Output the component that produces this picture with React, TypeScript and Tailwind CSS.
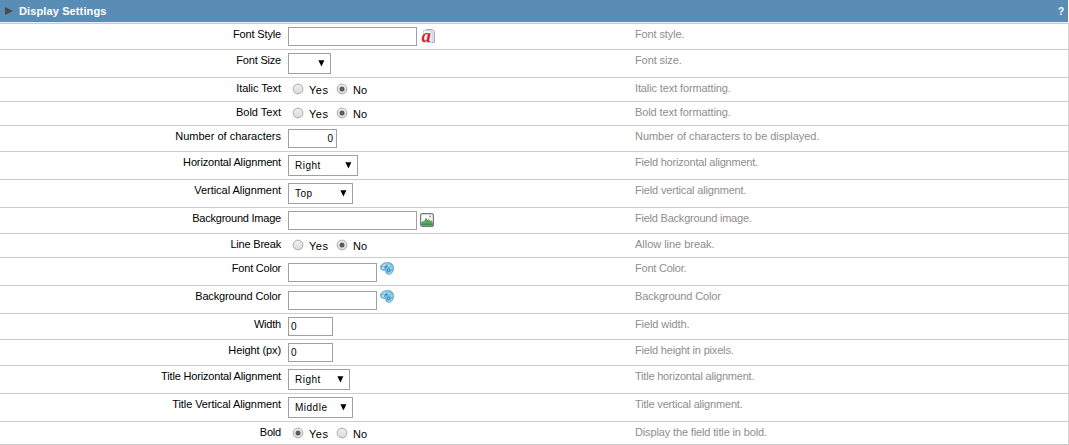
import React from "react";

function FontIcon() {
  return (
    <svg className="ml-1 mt-[2px] shrink-0" width="14" height="15" viewBox="0 0 14 15">
      <path d="M5.500 .5h6l2 2v11h-8z" fill="#dfe4f0" stroke="#a3aac0" />
      <path d="M2.500 1.500h6l2.500 2v10h-8.500z" fill="#f6f7fb" stroke="#c0c6d6" strokeWidth=".8" />
      <text x="0.500" y="12.500" fontFamily="Liberation Serif, serif" fontSize="19" fontWeight="bold" fontStyle="italic" fill="#d81f2c">a</text>
    </svg>
  );
}

function ImageIcon() {
  return (
    <svg className="ml-[3px] mt-[2px] shrink-0" width="14" height="14" viewBox="0 0 14 14">
      <rect x=".6" y=".6" width="12.800" height="12.800" rx="2" fill="#f8faf8" stroke="#77777f" strokeWidth="1.200" />
      <path d="M1.300 9.500 3 7.800 4 8.500l2-4L7.500 7 9 6l1.200 2L11.500 7.200l1.200 1.800v3.500h-11.400z" fill="#5aa561" />
      <path d="M1.300 10.500h11.400v2h-11.400z" fill="#3d8f4f" />
      <circle cx="10.200" cy="3.600" r="1" fill="#c58b6e" />
    </svg>
  );
}

function PaletteIcon() {
  return (
    <svg className="ml-[3px] -mt-px shrink-0" width="14" height="13" viewBox="0 0 14 13">
      <path d="M.4 5.400C.4 2.800 3.800 .5 7.500 .5c3.800 0 6.100 2.300 6.100 5.300 0 3.700-2.200 6.600-4.900 6.600-2 0-2.700-1-2.900-2.300C5.600 8.800 4.900 8.400 3.600 8.300 1.600 8.200.4 7 .4 5.400z" fill="#72b9dd" stroke="#609fc5" strokeWidth=".8" />
      <path d="M2 4C3.500 2 6.200 1.200 8.600 1.400 6.800 2 5.400 2.800 4.500 4.300z" fill="#b7dcec" />
      <circle cx="3" cy="6" r="1" fill="#d2edf7" />
      <circle cx="6" cy="4.800" r="1.100" fill="#4489b6" />
      <circle cx="9.200" cy="3.400" r="1.200" fill="#a6dfee" />
      <circle cx="11.500" cy="5.800" r="1.200" fill="#8edde0" />
      <circle cx="8.700" cy="8.300" r="1.700" fill="#3a88ba" />
      <circle cx="8.700" cy="8.300" r=".7" fill="#b9e5f2" />
      <path d="M7.500 11.200c1.800.6 3.500-.6 4.400-2.400" fill="none" stroke="#a5dced" />
    </svg>
  );
}

function Input({ width, value = "", right = false }: { width: string; value?: string; right?: boolean }) {
  return (
    <div className={`${width} h-[19px] shrink-0 border border-[#a0a0a0] bg-white pl-[2px] pr-[3px] pt-[2px] text-[10px] leading-[13px] text-black ${right ? "text-right" : ""}`}>
      {value}
    </div>
  );
}

function Select({ width, value = "" }: { width: string; value?: string }) {
  return (
    <div className={`${width} flex h-[21px] shrink-0 justify-between border border-[#a0a0a0] bg-white pl-[6px] pr-[5px] text-[10px] leading-[13px] tracking-[0.5px] text-black`}>
      <span className="pt-[3px]">{value}</span>
      <svg className="mt-[6px]" width="7" height="7" viewBox="0 0 7 7">
        <path d="M.4 .3h6L3.400 6.500z" fill="#000" />
      </svg>
    </div>
  );
}

function Radio({ on }: { on: boolean }) {
  return (
    <svg className="mt-[3px] shrink-0" width="12" height="12" viewBox="0 0 12 12">
      <defs>
        <linearGradient id="radioFill" x1="0" y1="0" x2="0" y2="1">
          <stop offset="0" stopColor="#f1f1f1" />
          <stop offset="1" stopColor="#dadada" />
        </linearGradient>
      </defs>
      <circle cx="6" cy="6" r="4.900" fill="url(#radioFill)" stroke="#a5a5a5" strokeWidth=".9" />
      {on && <circle cx="6" cy="6" r="2.500" fill="#5c5c5c" />}
    </svg>
  );
}

function YesNo({ yes = false }: { yes?: boolean }) {
  return (
    <div className="ml-[4px] mt-[2px] flex text-[11px] leading-[13px] text-black">
      <Radio on={yes} />
      <span className="ml-[5px] w-[27px] pt-[4px] tracking-[0.5px]">Yes</span>
      <Radio on={!yes} />
      <span className="ml-[5px] pt-[4px]">No</span>
    </div>
  );
}

type Row = {
  label: string;
  labelTracking?: string;
  help: string;
  helpTracking?: string;
  height: string;
  control: React.ReactNode;
  offset?: string;
};

const rows: Row[] = [
  { label: "Font Style", labelTracking: "tracking-[-0.15px]", help: "Font style.", helpTracking: "tracking-[-0.12px]", height: "h-[26px]", control: <><Input width="w-[129px]" /><FontIcon /></> },
  { label: "Font Size", labelTracking: "tracking-[-0.2px]", help: "Font size.", helpTracking: "tracking-[-0.1px]", height: "h-[28px]", control: <Select width="w-[43px]" /> },
  { label: "Italic Text", labelTracking: "tracking-[-0.08px]", help: "Italic text formatting.", helpTracking: "tracking-[-0.12px]", height: "h-[24px]", control: <YesNo />, offset: "pt-0" },
  { label: "Bold Text", help: "Bold text formatting.", helpTracking: "tracking-[-0.1px]", height: "h-[24px]", control: <YesNo />, offset: "pt-0" },
  { label: "Number of characters", help: "Number of characters to be displayed.", helpTracking: "tracking-[-0.04px]", height: "h-[26px]", control: <Input width="w-[49px]" value="0" right /> },
  { label: "Horizontal Alignment", labelTracking: "tracking-[-0.15px]", help: "Field horizontal alignment.", helpTracking: "tracking-[-0.2px]", height: "h-[28px]", control: <Select width="w-[70px]" value="Right" /> },
  { label: "Vertical Alignment", labelTracking: "tracking-[-0.04px]", help: "Field vertical alignment.", helpTracking: "tracking-[-0.17px]", height: "h-[28px]", control: <Select width="w-[65px]" value="Top" /> },
  { label: "Background Image", labelTracking: "tracking-[-0.22px]", help: "Field Background image.", helpTracking: "tracking-[-0.22px]", height: "h-[26px]", control: <><Input width="w-[129px]" /><ImageIcon /></> },
  { label: "Line Break", labelTracking: "tracking-[-0.2px]", help: "Allow line break.", helpTracking: "tracking-[-0.03px]", height: "h-[24px]", control: <YesNo />, offset: "pt-0" },
  { label: "Font Color", labelTracking: "tracking-[-0.22px]", help: "Font Color.", helpTracking: "tracking-[-0.22px]", height: "h-[28px]", control: <><Input width="w-[89px]" /><PaletteIcon /></>, offset: "pt-[5px]" },
  { label: "Background Color", labelTracking: "tracking-[-0.14px]", help: "Background Color", helpTracking: "tracking-[-0.14px]", height: "h-[28px]", control: <><Input width="w-[89px]" /><PaletteIcon /></>, offset: "pt-[5px]" },
  { label: "Width", labelTracking: "tracking-[-0.2px]", help: "Field width.", helpTracking: "tracking-[-0.1px]", height: "h-[26px]", control: <Input width="w-[45px]" value="0" /> },
  { label: "Height (px)", labelTracking: "tracking-[-0.1px]", help: "Field height in pixels.", helpTracking: "tracking-[-0.18px]", height: "h-[26px]", control: <Input width="w-[45px]" value="0" /> },
  { label: "Title Horizontal Alignment", labelTracking: "tracking-[-0.17px]", help: "Title horizontal alignment.", helpTracking: "tracking-[-0.21px]", height: "h-[28px]", control: <Select width="w-[62px]" value="Right" /> },
  { label: "Title Vertical Alignment", labelTracking: "tracking-[-0.09px]", help: "Title vertical alignment.", helpTracking: "tracking-[-0.18px]", height: "h-[28px]", control: <Select width="w-[65px]" value="Middle" /> },
  { label: "Bold", labelTracking: "tracking-[-0.2px]", help: "Display the field title in bold.", helpTracking: "tracking-[-0.14px]", height: "h-[23px]", control: <YesNo yes />, offset: "pt-0" },
];

export default function App() {
  return (
    <div className="h-[445px] w-[1069px] overflow-hidden bg-white font-['Liberation_Sans',Arial,sans-serif] text-[11px] leading-[13px]">
      <div className="flex h-[22px] w-[1068px] items-center bg-[#5a8db6] pl-[5px] pr-[4px] font-bold text-white">
        <svg width="8" height="8" viewBox="0 0 8 8">
          <path d="M0 0 8 4 0 8z" fill="#474c50" />
        </svg>
        <span className="ml-[6px] mt-px flex-1 tracking-[0.12px]">Display Settings</span>
        <span className="mt-px text-[10px]">?</span>
      </div>
      <div className="h-[2px] w-[1069px] border-b border-[#cccccc] bg-[#e9eff4]" />
      <div className="w-[1069px] border-r border-[#d4d4d4]">
        {rows.map((row) => (
          <div key={row.label} className={`${row.height} flex border-b border-[#cccccc]`}>
            <div className={`${row.labelTracking ?? "tracking-normal"} w-[281px] shrink-0 pt-[4px] text-right text-black`}>{row.label}</div>
            <div className={`${row.offset ?? "pt-[3px]"} ml-[7px] flex w-[347px] shrink-0 items-start`}>{row.control}</div>
            <div className={`${row.helpTracking ?? "tracking-normal"} pt-[4px] text-[#8e8e8e]`}>{row.help}</div>
          </div>
        ))}
      </div>
    </div>
  );
}
